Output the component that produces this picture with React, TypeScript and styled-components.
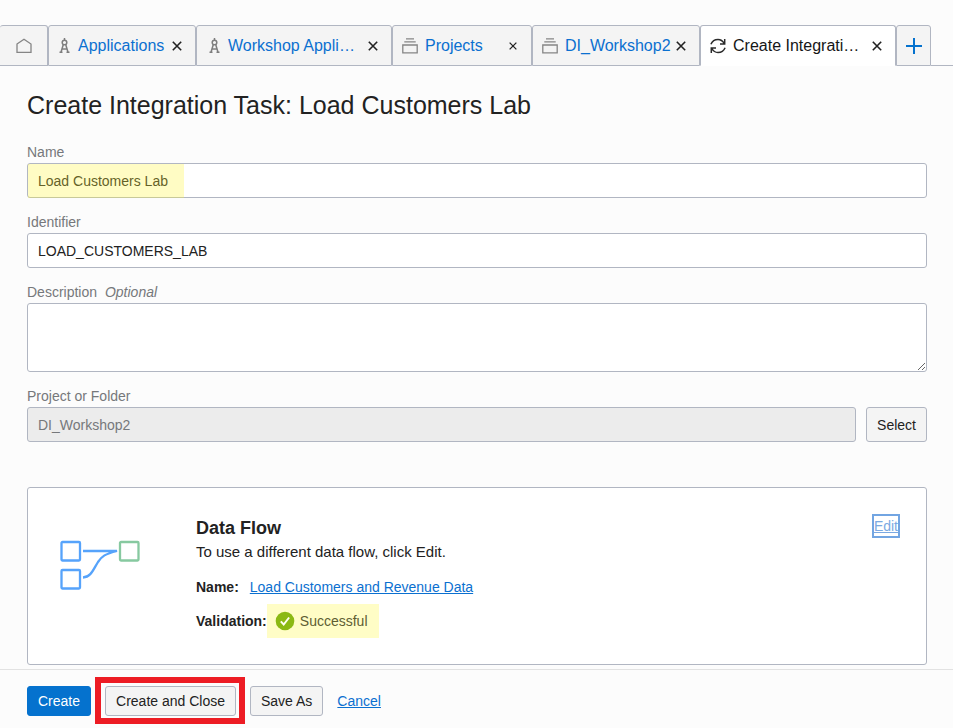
import React, { useState } from "react";
import styled, { createGlobalStyle, css } from "styled-components";

const GlobalStyle = createGlobalStyle`
  *, *::before, *::after { box-sizing: border-box; }
  body {
    margin: 0;
    background: #fcfcfc;
    color: #222222;
    font-family: "Liberation Sans", Arial, sans-serif;
    font-size: 14px;
    line-height: 20px;
  }
  button, input, textarea { font: inherit; color: inherit; }
`;

const line = "#b1b6c2";

const Page = styled.div`
  display: flex;
  flex-direction: column;
  min-height: 100vh;
`;

const TabBar = styled.nav`
  display: flex;
  padding-top: 25px;
  &::after {
    content: "";
    flex: 1;
    border-bottom: 1px solid ${line};
  }
`;

const Tab = styled.div<{ $width: number; $inset?: number; $active?: boolean }>`
  display: flex;
  align-items: center;
  flex: 0 0 ${(p) => p.$width}px;
  height: 41px;
  padding: 0 9px 0 ${(p) => p.$inset ?? 9}px;
  border: 1px solid ${line};
  border-radius: 3px 3px 0 0;
  background: #f4f4f4;
  ${(p) =>
    p.$active &&
    css`
      background: #ffffff;
      border-bottom-color: #ffffff;
    `}
`;

const TabLink = styled.button<{ $active?: boolean }>`
  display: flex;
  flex: 1;
  align-items: center;
  gap: 7px;
  min-width: 0;
  height: 100%;
  padding: 0;
  border: 0;
  background: none;
  font-size: 16px;
  text-align: left;
  white-space: nowrap;
  color: ${(p) => (p.$active ? "#161616" : "#0b70d0")};
  cursor: pointer;
  svg { flex: none; }
`;

const CloseButton = styled.button`
  display: grid;
  place-items: center;
  flex: none;
  width: 18px;
  height: 20px;
  padding: 0;
  border: 0;
  background: none;
  color: #222222;
  cursor: pointer;
`;

const IconTab = styled.button<{ $home?: boolean }>`
  display: grid;
  place-items: center;
  flex: 0 0 ${(p) => (p.$home ? 48 : 35)}px;
  height: 41px;
  padding: 0;
  border: 1px solid ${line};
  border-left-width: ${(p) => (p.$home ? 0 : 1)}px;
  border-radius: 3px 3px 0 0;
  background: #f4f4f4;
  cursor: pointer;
`;

const Main = styled.main`
  flex: 1;
  padding: 23px 26px 4px 27px;
`;

const Title = styled.h1`
  margin: 0 0 22px;
  font-size: 25px;
  font-weight: 400;
  line-height: 32px;
`;

const Field = styled.div<{ $last?: boolean }>`
  display: flex;
  flex-direction: column;
  margin-bottom: ${(p) => (p.$last ? 45 : 15)}px;
`;

const Label = styled.label`
  margin-bottom: 2px;
  line-height: 18px;
  color: #76787b;
  em { margin-left: 4px; }
`;

const InputFrame = styled.div`
  position: relative;
  display: flex;
  gap: 10px;
`;

const controlStyle = css`
  display: block;
  width: 100%;
  min-width: 0;
  border: 1px solid ${line};
  border-radius: 3px;
  background: #ffffff;
  padding: 0 10px;
`;

const TextInput = styled.input`
  ${controlStyle}
  height: 35px;
  &:disabled {
    background: #ececec;
    color: #76787b;
  }
`;

const TextArea = styled.textarea`
  ${controlStyle}
  height: 69px;
  padding: 8px 10px;
  resize: vertical;
`;

const Marker = styled.span`
  position: absolute;
  inset: 1px auto 0 1px;
  width: 156px;
  background: rgba(255, 244, 60, 0.3);
  pointer-events: none;
`;

const Card = styled.section`
  display: flex;
  align-items: flex-start;
  min-height: 178px;
  padding: 26px;
  border: 1px solid ${line};
  border-radius: 3px;
  background: #ffffff;
`;

const Diagram = styled.svg`
  flex: none;
  margin: 26px 55px 0 6px;
`;

const CardBody = styled.div`
  flex: 1;
`;

const CardTitle = styled.h2`
  margin: 2px 0 0;
  font-size: 18px;
  line-height: 24px;
`;

const CardHint = styled.p`
  margin: 0 0 6px;
  font-size: 15px;
  line-height: 24px;
`;

const Detail = styled.div<{ $gap?: boolean }>`
  display: flex;
  align-items: center;
  gap: ${(p) => (p.$gap ? 11 : 0)}px;
  min-height: 34px;
`;

const Link = styled.a`
  color: #0b70d0;
  text-decoration: underline;
`;

const EditLink = styled(Link)`
  border: 2px solid #72a5e2;
  color: #7ba9e2;
`;

const Status = styled.span`
  display: flex;
  align-items: center;
  gap: 5px;
  height: 34px;
  padding: 0 11px 0 8px;
  background: #fffdc6;
  color: #5e5d33;
`;

const Footer = styled.footer`
  display: flex;
  align-items: center;
  padding: 7px 27px 4px;
  border-top: 1px solid #e2e2e2;
`;

const Button = styled.button<{ $primary?: boolean; $tall?: boolean }>`
  flex: none;
  height: ${(p) => (p.$tall ? 35 : 30)}px;
  padding: 0 10px;
  border: 1px solid ${(p) => (p.$primary ? "#0572ce" : line)};
  border-radius: 3px;
  background: ${(p) => (p.$primary ? "#0572ce" : "#f4f4f4")};
  color: ${(p) => (p.$primary ? "#ffffff" : "#222222")};
  cursor: pointer;
`;

const Callout = styled.div`
  display: flex;
  margin: 0 5px 0 4px;
  padding: 3px 3px 2px 4px;
  border: 6px solid #ed1c24;
`;

const CancelLink = styled(Link)`
  margin-left: 14px;
`;

const HomeIcon = () => (
  <svg width="16" height="16" viewBox="0 0 16 16" fill="none" stroke="#858585" strokeWidth="1.3">
    <path d="M1 6 8 1.2 15 6v8.400H1Z" />
  </svg>
);

const CompassIcon = () => (
  <svg width="13" height="16" viewBox="0 0 13 16" fill="none" stroke="#7d7d7d" strokeWidth="1.500">
    <path d="M6.500 0v2" />
    <circle cx="6.500" cy="4.500" r="2.300" />
    <path d="M5.300 6.500 3 14.300M7.700 6.500l2.300 7.800M3.800 11h5.400M1.500 14.300h3M8.500 14.300h3" />
  </svg>
);

const ProjectIcon = () => (
  <svg width="16" height="16" viewBox="0 0 16 16" fill="none" stroke="#858585" strokeWidth="1.300">
    <path d="M4 .8h8M2.300 3.800h11.400M.8 7h14.400v7.800H.8Z" />
  </svg>
);

const SyncIcon = () => (
  <svg width="16" height="16" viewBox="0 0 16 16" fill="none" stroke="#2b2b2b" strokeWidth="1.500">
    <path d="M.9 6.300C2.300 3 5 1.500 8 1.500c2.600 0 4.700 1.300 6.200 4M14.700 1v5H10M15.100 9.700C13.700 13 11 14.500 8 14.500c-2.600 0-4.700-1.300-6.200-4M1.300 15v-5H6" />
  </svg>
);

const CloseIcon = ({ size = 10 }: { size?: number }) => (
  <svg width={size} height={size} viewBox="0 0 10 10" fill="none" stroke="currentColor" strokeWidth="1.600">
    <path d="m.8.8 8.400 8.400M9.200.8.8 9.200" />
  </svg>
);

const CheckIcon = () => (
  <svg width="20" height="20" viewBox="0 0 20 20">
    <circle cx="10" cy="10" r="9.300" fill="#8bb913" />
    <path d="m5.800 10.300 2.900 3.200 5.400-7" fill="none" stroke="#fffff0" strokeWidth="2" />
  </svg>
);

const tabs = [
  { label: "Applications", width: 148, Icon: CompassIcon },
  { label: "Workshop Appli…", width: 196, Icon: CompassIcon, inset: 11 },
  { label: "Projects", width: 140, Icon: ProjectIcon, close: 8 },
  { label: "DI_Workshop2", width: 168, Icon: ProjectIcon },
  { label: "Create Integrati…", width: 196, Icon: SyncIcon, active: true },
];

export default function App() {
  const [name, setName] = useState("Load Customers Lab");
  const [identifier, setIdentifier] = useState("LOAD_CUSTOMERS_LAB");
  const [description, setDescription] = useState("");

  return (
    <>
      <GlobalStyle />
      <Page>
        <TabBar>
          <IconTab $home aria-label="Home"><HomeIcon /></IconTab>
          {tabs.map(({ label, width, Icon, inset, close, active }) => (
            <Tab key={label} $width={width} $inset={inset} $active={active}>
              <TabLink $active={active}><Icon />{label}</TabLink>
              <CloseButton aria-label={`Close ${label}`}><CloseIcon size={close} /></CloseButton>
            </Tab>
          ))}
          <IconTab aria-label="New tab">
            <svg width="16" height="16" viewBox="0 0 16 16" stroke="#0572ce" strokeWidth="2">
              <path d="M8 0v16M0 8h16" />
            </svg>
          </IconTab>
        </TabBar>
        <Main>
          <Title>Create Integration Task: Load Customers Lab</Title>
          <Field>
            <Label htmlFor="name">Name</Label>
            <InputFrame>
              <TextInput id="name" value={name} onChange={(e) => setName(e.target.value)} />
              <Marker />
            </InputFrame>
          </Field>
          <Field>
            <Label htmlFor="identifier">Identifier</Label>
            <TextInput id="identifier" value={identifier} onChange={(e) => setIdentifier(e.target.value)} />
          </Field>
          <Field>
            <Label htmlFor="description">Description <em>Optional</em></Label>
            <TextArea id="description" value={description} onChange={(e) => setDescription(e.target.value)} />
          </Field>
          <Field $last>
            <Label htmlFor="project">Project or Folder</Label>
            <InputFrame>
              <TextInput id="project" value="DI_Workshop2" disabled />
              <Button $tall>Select</Button>
            </InputFrame>
          </Field>
          <Card>
            <Diagram width="81" height="51" viewBox="0 0 81 51" fill="none" stroke="#56a3fb" strokeWidth="2.300">
              <rect x="1.500" y="2" width="18.500" height="18.500" rx="1" />
              <rect x="1.500" y="30" width="18.500" height="18.500" rx="1" />
              <rect x="60" y="2" width="18.500" height="18.500" rx="1" stroke="#87c9a0" />
              <path d="M23 11h34C45 14 42 16 38 22c-5 8-7 15-15 15.500" />
            </Diagram>
            <CardBody>
              <CardTitle>Data Flow</CardTitle>
              <CardHint>To use a different data flow, click Edit.</CardHint>
              <Detail $gap>
                <b>Name:</b>
                <Link href="#data-flow">Load Customers and Revenue Data</Link>
              </Detail>
              <Detail>
                <b>Validation:</b>
                <Status><CheckIcon />Successful</Status>
              </Detail>
            </CardBody>
            <EditLink href="#edit">Edit</EditLink>
          </Card>
        </Main>
        <Footer>
          <Button $primary>Create</Button>
          <Callout><Button>Create and Close</Button></Callout>
          <Button>Save As</Button>
          <CancelLink href="#cancel">Cancel</CancelLink>
        </Footer>
      </Page>
    </>
  );
}
